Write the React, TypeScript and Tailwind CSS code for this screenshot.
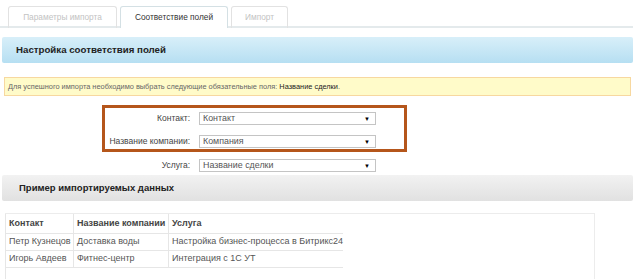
const rows = [
  ["Петр Кузнецов", "Доставка воды", "Настройка бизнес-процесса в Битрикс24"],
  ["Игорь Авдеев", "Фитнес-центр", "Интеграция с 1С УТ"],
];

function Select({ value }: { value: string }) {
  return (
    <div className="flex h-[13px] w-[177px] items-center justify-between border border-[#c4c4c4] bg-white pl-[3px] pr-[5px] text-[8.9px] leading-none text-[#555]">
      <span>{value}</span>
      <span className="text-[6px] text-black">▼</span>
    </div>
  );
}

function FieldRow({ label, value }: { label: string; value: string }) {
  return (
    <div className="flex h-[13px] items-center">
      <div className="w-[191px] whitespace-nowrap pr-[1px] text-right text-[8.5px] text-[#444]">{label}</div>
      <div className="ml-[8px]">
        <Select value={value} />
      </div>
    </div>
  );
}

export default function App() {
  return (
    <div
      className="h-[279px] w-[640px] overflow-hidden bg-white"
      style={{ fontFamily: '"Liberation Sans", Arial, sans-serif' }}
    >
      <div className="mr-[7px] flex items-end gap-[3px] border-b-2 border-[#e4eaec] pl-[8px] pt-[6px]">
        <div className="-mb-[2px] flex h-[22px] w-[109px] items-center justify-center rounded-t-[3px] border border-b-0 border-[#e2e2e2] text-[8.3px] text-[#c3c3c3]">
          Параметры импорта
        </div>
        <div className="-mb-[2px] flex h-[22px] w-[108px] items-center justify-center rounded-t-[3px] border border-b-0 border-[#d4e0e4] bg-white pb-[1px] text-[8.3px] text-[#333]">
          Соответствие полей
        </div>
        <div className="-mb-[2px] flex h-[22px] w-[57px] items-center justify-center rounded-t-[3px] border border-b-0 border-[#e2e2e2] text-[8.3px] text-[#c3c3c3]">
          Импорт
        </div>
      </div>

      <div className="ml-[2px] mr-[7px] mt-[9px] flex h-[26px] items-center rounded-[2px] bg-gradient-to-b from-[#d8eff9] to-[#b6dff2] pl-[14px] text-[9.7px] font-bold text-[#222]">
        Настройка соответствия полей
      </div>

      <div className="ml-[4px] mr-[9px] mt-[14px] flex h-[19px] items-center whitespace-nowrap border border-[#f7d8a0] bg-[#fffbc9] pl-[3px] text-[7.4px] text-[#666]">
        Для успешного импорта необходимо выбрать следующие обязательные поля:&nbsp;
        <span className="text-[#222]">Название сделки</span>.
      </div>

      <div className="mt-[9px]">
        <div className="ml-[102px] flex w-[305px] flex-col gap-[10px] border-[3px] border-[#b5561b] pb-[1px] pt-[4px]">
          <div className="-ml-[105px] flex flex-col gap-[10px]">
            <FieldRow label="Контакт:" value="Контакт" />
            <FieldRow label="Название компании:" value="Компания" />
          </div>
        </div>
        <div className="mt-[7px]">
          <FieldRow label="Услуга:" value="Название сделки" />
        </div>
      </div>

      <div className="ml-[2px] mr-[7px] mt-[3px] flex h-[26px] items-center rounded-[2px] bg-gradient-to-b from-[#f2f2f2] to-[#e1e1e1] pl-[17px] text-[9.5px] font-bold text-[#222]">
        Пример импортируемых данных
      </div>

      <div className="ml-[5px] mt-[12px] h-[80px] w-[590px] border-r border-t border-[#ececec]">
        <table className="w-[337px] table-fixed border-collapse text-[9px]">
          <colgroup>
            <col className="w-[68px]" />
            <col className="w-[95px]" />
            <col className="w-[174px]" />
          </colgroup>
          <thead>
            <tr className="h-[19px] text-left">
              <th className="whitespace-nowrap border-b border-l border-r border-[#e6e6e6] pl-[3px] font-bold text-[#444]">Контакт</th>
              <th className="whitespace-nowrap border-b border-r border-[#e6e6e6] pl-[3px] font-bold text-[#444]">Название компании</th>
              <th className="whitespace-nowrap border-b border-[#e6e6e6] pl-[3px] font-bold text-[#444]">Услуга</th>
            </tr>
          </thead>
          <tbody>
            {rows.map((r) => (
              <tr key={r[0]} className="h-[17px] text-[#555]">
                <td className="whitespace-nowrap border-b border-l border-r border-[#e6e6e6] pl-[3px]">{r[0]}</td>
                <td className="whitespace-nowrap border-b border-r border-[#e6e6e6] pl-[3px]">{r[1]}</td>
                <td className="whitespace-nowrap border-b border-[#e6e6e6] pl-[3px]">{r[2]}</td>
              </tr>
            ))}
            <tr className="h-[14px]">
              <td className="border-l border-[#e6e6e6]" />
              <td />
              <td />
            </tr>
          </tbody>
        </table>
      </div>
    </div>
  );
}
